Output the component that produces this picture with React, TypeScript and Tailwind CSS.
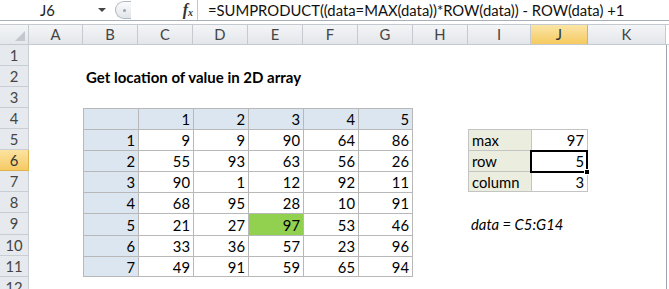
import React from 'react';

type Cell = {
  text?: string;
  bg?: string;
  align?: 'left' | 'right';
  bold?: boolean;
  italic?: boolean;
  box?: 'main' | 'side';
};

const COLS = [
  { key: 'A', width: 'w-[54px]' },
  { key: 'B', width: 'w-[55px]' },
  { key: 'C', width: 'w-[55px]' },
  { key: 'D', width: 'w-[55px]' },
  { key: 'E', width: 'w-[55px]' },
  { key: 'F', width: 'w-[55px]' },
  { key: 'G', width: 'w-[55px]' },
  { key: 'H', width: 'w-[55px]' },
  { key: 'I', width: 'w-[63px]' },
  { key: 'J', width: 'w-[57px]' },
  { key: 'K', width: 'w-[78px]' },
];

const ROWS = [
  { n: 1, height: 'h-[21px]' },
  { n: 2, height: 'h-[21px]' },
  { n: 3, height: 'h-[21px]' },
  { n: 4, height: 'h-[21px]' },
  { n: 5, height: 'h-[21px]' },
  { n: 6, height: 'h-[21px]' },
  { n: 7, height: 'h-[21px]' },
  { n: 8, height: 'h-[21px]' },
  { n: 9, height: 'h-[22px]' },
  { n: 10, height: 'h-[21px]' },
  { n: 11, height: 'h-[21px]' },
  { n: 12, height: 'h-[21px]' },
];

const values = [
  [9, 9, 90, 64, 86],
  [55, 93, 63, 56, 26],
  [90, 1, 12, 92, 11],
  [68, 95, 28, 10, 91],
  [21, 27, 97, 53, 46],
  [33, 36, 57, 23, 96],
  [49, 91, 59, 65, 94],
];

// build the sheet contents
const cells: Record<string, Cell> = {
  B2: { text: 'Get location of value in 2D array', bold: true, align: 'left' },
  B4: { bg: 'bg-[#dce6f1]', box: 'main' },
  I5: { text: 'max', bg: 'bg-[#ebeedf]', align: 'left', box: 'side' },
  J5: { text: '97', box: 'side' },
  I6: { text: 'row', bg: 'bg-[#ebeedf]', align: 'left', box: 'side' },
  J6: { text: '5', box: 'side' },
  I7: { text: 'column', bg: 'bg-[#ebeedf]', align: 'left', box: 'side' },
  J7: { text: '3', box: 'side' },
  I9: { text: 'data = C5:G14', italic: true, align: 'left' },
};
['C', 'D', 'E', 'F', 'G'].forEach((c, i) => {
  cells[`${c}4`] = { text: String(i + 1), bg: 'bg-[#dce6f1]', box: 'main' };
});
values.forEach((row, r) => {
  cells[`B${r + 5}`] = { text: String(r + 1), bg: 'bg-[#dce6f1]', box: 'main' };
  row.forEach((v, i) => {
    const key = `${'CDEFG'[i]}${r + 5}`;
    cells[key] = { text: String(v), box: 'main', bg: key === 'E9' ? 'bg-[#92d050]' : undefined };
  });
});

function clsx(...parts: (string | false | undefined)[]) {
  return parts.filter(Boolean).join(' ');
}

const borderFor = (col: string, row: number, box?: 'main' | 'side') => {
  if (box === 'main') {
    return clsx('border-t border-l border-[#b8b8b8]', col === 'G' && 'border-r', row === 11 && 'border-b');
  }
  if (box === 'side') {
    return clsx('border-t border-l border-[#c4c4c4]', col === 'J' && 'border-r', row === 7 && 'border-b');
  }
  return '';
};

const FormulaBar = () => (
  <div className="flex h-[21px] border-b border-[#a9afb8] bg-white">
    <div className="relative flex w-[113px] items-center justify-center pr-[18px] text-[14.8px] text-[#222]">
      J6
      <span className="absolute right-[7px] top-[8px] h-0 w-0 border-x-[4px] border-t-[4px] border-x-transparent border-t-[#444]" />
    </div>
    <div className="flex w-[84px] items-center">
      <div className="ml-[2px] flex h-[18px] w-[16px] items-center justify-center rounded-l-full border border-r-0 border-[#b2b8c0] bg-gradient-to-b from-[#fafbfc] to-[#e2e5e9]">
        <span className="ml-[2px] h-[3px] w-[3px] rounded-full bg-[#9aa1aa]" />
      </div>
      <div className="ml-auto mr-[4px] flex items-end [font-family:'Liberation_Serif',serif] italic text-[#333]">
        <span className="text-[16px] font-bold leading-none">f</span>
        <span className="text-[10px] font-bold leading-none">x</span>
      </div>
    </div>
    <div className="flex flex-1 items-center border-l border-[#c3c8ce] pl-[10px] text-[14.8px] text-[#111]">
      =SUMPRODUCT((data=MAX(data))*ROW(data)) - ROW(data) +1
    </div>
  </div>
);

const HeaderRow = () => (
  <div className="flex h-[21px] border-t border-b border-[#c5cad1]">
    <div className="relative w-[29px] border-r border-[#c5cad1] bg-gradient-to-b from-[#f3f5f7] to-[#e4e7eb]">
      <span className="absolute bottom-[3px] right-[3px] h-[10px] w-[10px] bg-[#c3c8ce] [clip-path:polygon(100%_0,100%_100%,0_100%)]" />
    </div>
    {COLS.map((c) => (
      <div
        key={c.key}
        className={clsx(
          c.width,
          'flex items-center justify-center border-r text-[14.8px]',
          c.key === 'J'
            ? 'border-[#e1b24a] bg-gradient-to-b from-[#fbe6a6] to-[#f5c95e] text-[#333]'
            : 'border-[#c5cad1] bg-gradient-to-b from-[#f4f5f7] to-[#e3e6ea] text-[#444]'
        )}
      >
        {c.key}
      </div>
    ))}
    <div className="flex-1 bg-white" />
  </div>
);

const SheetCell = ({ col, row, width, height }: { col: string; row: number; width: string; height: string }) => {
  const cell = cells[`${col}${row}`];
  const selected = col === 'J' && row === 6;
  return (
    <div
      className={clsx(
        width,
        height,
        'relative flex shrink-0 items-center whitespace-nowrap pt-[1px]',
        cell?.bg,
        borderFor(col, row, cell?.box),
        cell?.align === 'left' ? 'justify-start pl-[4px]' : 'justify-end pr-[3px]',
        cell?.bold && 'font-bold text-[15px]',
        cell?.italic && 'italic'
      )}
    >
      {cell?.text && <span className={cell.align === 'left' ? 'absolute left-[3px] z-[1]' : ''}>{cell.text}</span>}
      {selected && (
        <>
          <span className="absolute -left-[2px] -top-[1px] -right-[1px] -bottom-[2px] z-10 border-2 border-black" />
          <span className="absolute -right-[3px] -bottom-[4px] z-20 h-[6px] w-[6px] border border-white bg-black" />
        </>
      )}
    </div>
  );
};

export default function App() {
  return (
    <div className="relative h-[289px] w-[669px] overflow-hidden bg-white text-[14.8px] text-black [font-family:Lato,sans-serif]">
      <FormulaBar />
      <div className="h-[3px] bg-white" />
      <HeaderRow />
      {ROWS.map((r) => (
        <div key={r.n} className="flex">
          <div
            className={clsx(
              'flex w-[29px] shrink-0 items-center justify-center border-r border-b text-[14.8px]',
              r.height,
              r.n === 6
                ? 'border-[#e1b24a] bg-gradient-to-b from-[#fbe3a0] to-[#f6ca62] text-[#333]'
                : 'border-[#c9ced5] bg-[#e6e9ee] text-[#444]'
            )}
          >
            {r.n}
          </div>
          {COLS.map((c) => (
            <SheetCell key={c.key} col={c.key} row={r.n} width={c.width} height={r.height} />
          ))}
          <div className={clsx('flex-1 border-l border-[#9da3ab] bg-white', r.height)} />
        </div>
      ))}
    </div>
  );
}
